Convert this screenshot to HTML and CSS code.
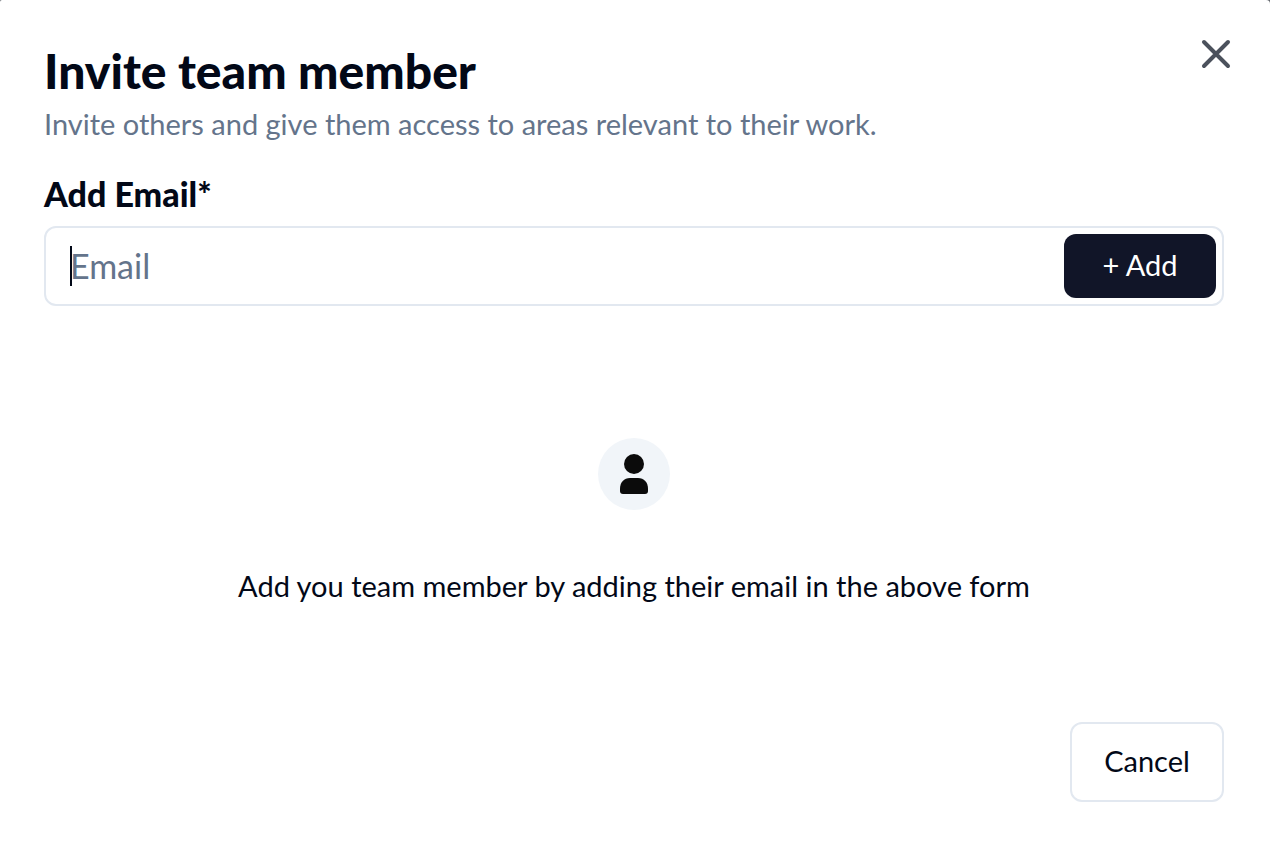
FILE: index.html
```html
<!DOCTYPE html>
<html lang="en">

<head>
    <meta charset="UTF-8">
    <meta name="viewport" content="width=device-width, initial-scale=1.0">
    <title>Invite team member</title>
    <link rel="stylesheet" href="styles.css">
</head>

<body>
    <main class="modal">
        <header class="modal-header">
            <div>
                <h1>Invite team member</h1>
                <p>Invite others and give them access to areas relevant to their work.</p>
            </div>
            <button type="button" class="btn-close" aria-label="Close">
                <svg viewBox="0 0 32 32" width="32" height="32">
                    <path d="M4 4L28 28M28 4L4 28" />
                </svg>
            </button>
        </header>

        <form class="invite-form">
            <label for="email">Add Email*</label>
            <div class="input-group">
                <span class="caret"></span>
                <input type="email" id="email" placeholder="Email">
                <button type="submit" class="btn-add">+ Add</button>
            </div>
        </form>

        <section class="empty-state">
            <div class="avatar">
                <svg viewBox="0 0 28 40" width="28" height="40">
                    <circle cx="14" cy="10" r="10" />
                    <path d="M0 37V35C0 28 4 24 10 24H18C24 24 28 28 28 35V37Q28 40 25 40H3Q0 40 0 37Z" />
                </svg>
            </div>
            <p>Add you team member by adding their email in the above form</p>
        </section>

        <footer class="modal-footer">
            <button type="button" class="btn-cancel">Cancel</button>
        </footer>
    </main>
</body>

</html>
```
FILE: styles.css
```css
* {
    box-sizing: border-box;
}

body {
    margin: 0;
    background-color: #64686e;
    color: #020817;
    font-family: Lato, "Open Sans", sans-serif;
}

h1,
p {
    margin: 0;
}

button,
input {
    font-family: inherit;
    color: inherit;
}

button {
    cursor: pointer;
}

.modal {
    min-height: 100vh;
    padding: 38px 46px 40px 44px;
    border-radius: 2px 4px 0 0;
    background-color: #fff;
}

.modal-header {
    display: flex;
    justify-content: space-between;
    align-items: flex-start;
}

.modal-header h1 {
    font-size: 48px;
    line-height: 66px;
    font-weight: 900;
}

.modal-header p {
    font-size: 29px;
    line-height: 40px;
    color: #64748b;
}

.btn-close {
    display: flex;
    margin-right: -8px;
    padding: 0;
    border: none;
    background: none;
}

.btn-close svg {
    fill: none;
    stroke: #4b515c;
    stroke-width: 4;
    stroke-linecap: round;
}

.invite-form {
    margin-top: 32px;
}

.invite-form label {
    display: block;
    margin-bottom: 14px;
    font-size: 34px;
    line-height: 36px;
    font-weight: 900;
}

.input-group {
    position: relative;
    display: flex;
    align-items: center;
    height: 80px;
    padding: 6px 6px 6px 24px;
    border: 2px solid #e2e8f0;
    border-radius: 12px;
}

.caret {
    position: absolute;
    left: 24px;
    width: 2px;
    height: 40px;
    background-color: #020817;
}

.input-group input {
    flex: 1;
    min-width: 0;
    padding: 0;
    border: none;
    outline: none;
    font-size: 34px;
    line-height: 40px;
}

.input-group input::placeholder {
    color: #64748b;
    opacity: 1;
}

.btn-add {
    width: 152px;
    height: 64px;
    padding: 0 0 4px;
    border: none;
    border-radius: 12px;
    background-color: #111528;
    color: #fff;
    font-size: 29px;
}

.empty-state {
    display: flex;
    flex-direction: column;
    align-items: center;
    padding: 132px 0 116px;
    text-align: center;
}

.avatar {
    display: flex;
    justify-content: center;
    align-items: center;
    width: 72px;
    height: 72px;
    border-radius: 50%;
    background-color: #f1f5f9;
    fill: #0b0b0b;
}

.empty-state p {
    margin-top: 56px;
    font-size: 29px;
    line-height: 40px;
}

.modal-footer {
    display: flex;
    justify-content: flex-end;
}

.btn-cancel {
    width: 154px;
    height: 80px;
    padding: 0 0 4px;
    border: 2px solid #e2e8f0;
    border-radius: 12px;
    background-color: #fff;
    font-size: 29px;
}
```
